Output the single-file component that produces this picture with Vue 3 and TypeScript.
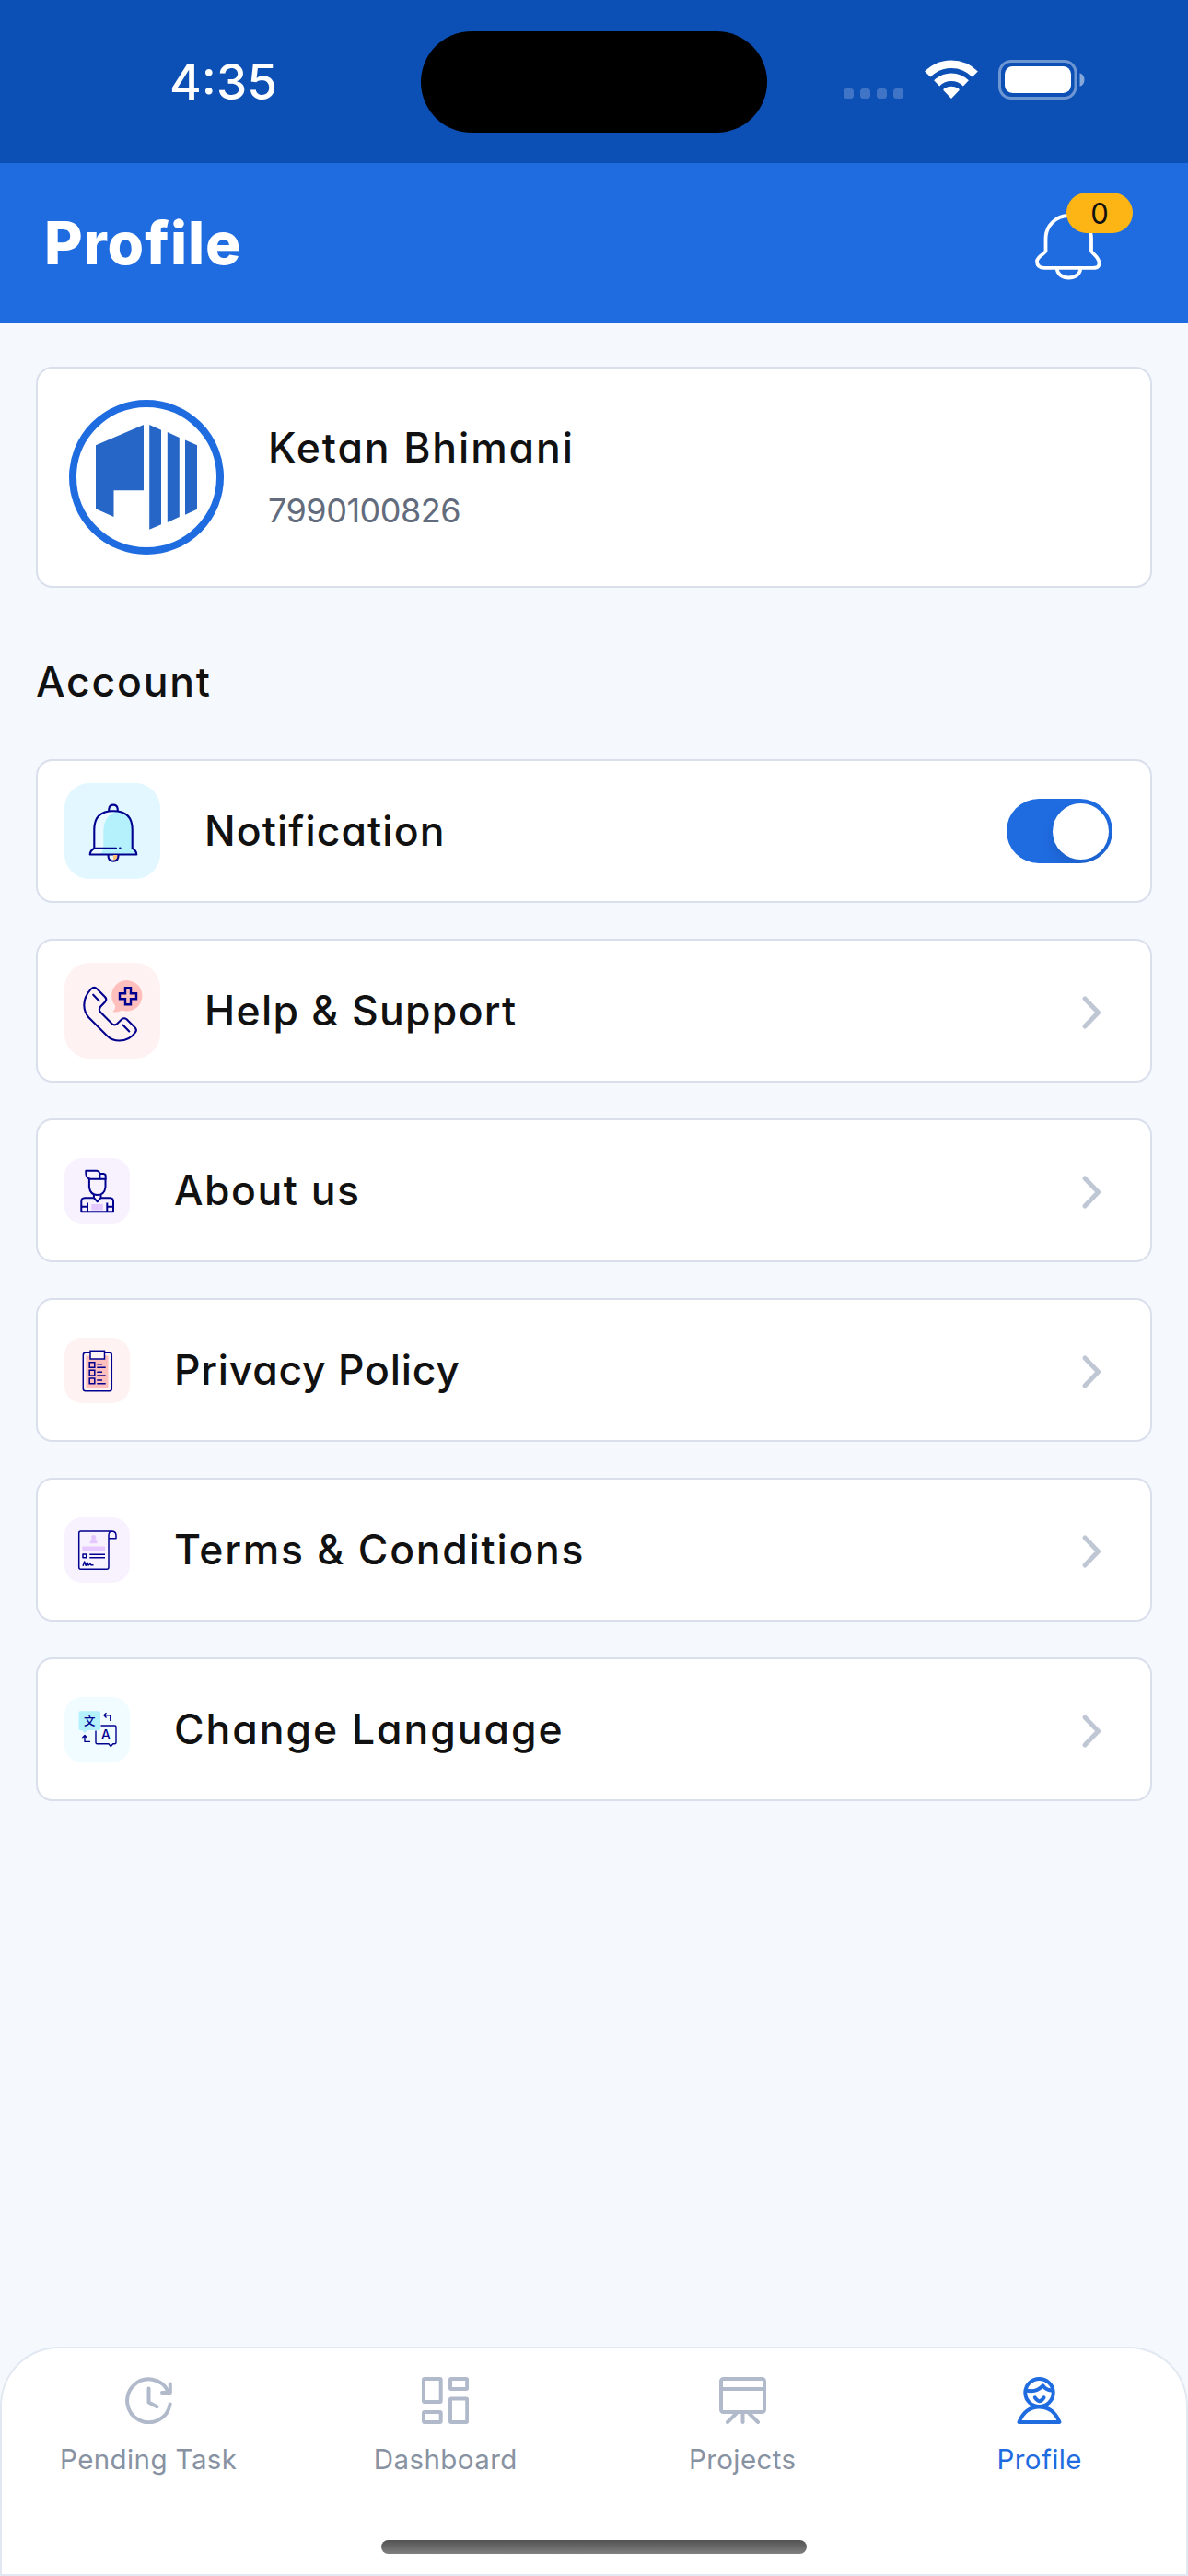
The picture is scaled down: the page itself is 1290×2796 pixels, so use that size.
<script setup lang="ts">
interface Row {
  id: string
  label: string
  size: 'lg' | 'sm'
  tint: string
  spacing: string
  toggle?: boolean
}

const rows: Row[] = [
  { id: 'bell', label: 'Notification', size: 'lg', tint: '#e2f7ff', spacing: '1.1px', toggle: true },
  { id: 'phone', label: 'Help & Support', size: 'lg', tint: '#fff2f2', spacing: '1.3px' },
  { id: 'person', label: 'About us', size: 'sm', tint: '#f8f2ff', spacing: '1.5px' },
  { id: 'clipboard', label: 'Privacy Policy', size: 'sm', tint: '#fff2f2', spacing: '0.75px' },
  { id: 'terms', label: 'Terms & Conditions', size: 'sm', tint: '#f8f2ff', spacing: '1.75px' },
  { id: 'language', label: 'Change Language', size: 'sm', tint: '#f0fcff', spacing: '1.95px' },
]

const tabs = [
  { id: 'pending', label: 'Pending Task', active: false },
  { id: 'dashboard', label: 'Dashboard', active: false },
  { id: 'projects', label: 'Projects', active: false },
  { id: 'profile', label: 'Profile', active: true },
]
</script>

<template>
  <div class="app">
    <div class="status">
      <div class="time">4:35</div>
      <div class="island"></div>
      <div class="indicators">
        <div class="dots"><i v-for="n in 4" :key="n"></i></div>
        <svg class="wifi" width="58" height="42" viewBox="0 0 58 42">
          <g fill="none" stroke="#fff" stroke-width="8.6">
            <path d="M3.2 15.6C17.5 1.1 40.500 1.100 54.800 15.600" />
            <path d="M13.100 25.400C22.200 16.600 35.800 16.600 44.900 25.400" />
          </g>
          <path fill="#fff" d="M29 42L20.400 33Q20 31.600 21.400 31Q29 26.400 36.600 31Q38 31.600 37.600 33Z" />
        </svg>
        <svg class="battery" width="94" height="43" viewBox="0 0 94 43">
          <rect x="1.500" y="1.500" width="82.500" height="40" rx="12.500" fill="none" stroke="#6d96d3" stroke-width="3" />
          <rect x="7" y="7" width="72" height="29" rx="8.500" fill="#fff" />
          <path d="M88.500 14.200V28.800Q93.500 27 93.500 21.500Q93.500 16 88.500 14.200Z" fill="#86a8da" />
        </svg>
      </div>
    </div>

    <header class="header">
      <h1>Profile</h1>
      <div class="alerts">
        <svg width="72" height="72" viewBox="0 0 72 72" fill="none" stroke="#fff" stroke-width="3.800">
          <path d="M11.500 40.500V27A24.750 25 0 0 1 61 27V40.500C61 42.500 69.500 46.500 69.500 53.500C69.500 59 65.500 58.900 62 58.900H10.500C6.500 58.900 2 58 2 51.500C2 46.500 11.500 42.500 11.500 40.500Z" />
          <path d="M23.800 59C23.800 73 49.200 73 49.200 59" />
        </svg>
        <span class="badge">0</span>
      </div>
    </header>

    <main class="content">
      <section class="card user">
        <svg class="avatar" width="168" height="168" viewBox="75 434 168 168">
          <circle cx="159" cy="518" r="80" fill="#fff" stroke="#1f6be0" stroke-width="8" />
          <g fill="#2566c7">
            <path d="M104 483.300L156 461V532.300H123.500V561L104 552.300Z" />
            <path d="M162.200 461L175 466.700V569.300L162.200 574.700Z" />
            <path d="M181.800 469L194.800 475V561L181.800 567Z" />
            <path d="M201 477.500L214 483.300V552.700L201 558.700Z" />
          </g>
        </svg>
        <div class="who">
          <div class="name">Ketan Bhimani</div>
          <div class="number">7990100826</div>
        </div>
      </section>

      <h2>Account</h2>

      <section class="list">
        <div v-for="row in rows" :key="row.id" class="card row">
          <svg :class="['tile', row.size]" :viewBox="row.size === 'lg' ? '0 0 104 104' : '0 0 71 71'">
            <rect width="100%" height="100%" :rx="row.size === 'lg' ? 27 : 19" :fill="row.tint" />

            <g v-if="row.id === 'bell'" fill="none" stroke="#00008f" stroke-width="2.100" stroke-linejoin="round" stroke-linecap="round">
              <path d="M32.300 50.500Q32.300 30 53 30Q73.700 30 73.700 50.500V70.700Q77.500 73 78 77.300H27.800Q28.500 73 32.300 70.700Z" fill="#e9f9ff" stroke="none" />
              <path d="M42.300 52Q43 35 56 31Q73.700 32 73.700 50.500V70.700Q77.500 73 78 77.300H38Q42 75 42.300 70Z" fill="#b4f1fd" stroke="none" />
              <path d="M48.300 30V27.800Q49 23.600 53 23.600Q57 23.600 57.700 27.800V30" />
              <path d="M56 70.700H32.300V50.500Q32.300 30.300 53 30.300Q73.700 30.300 73.700 50.500V70.700Q78 73 78.300 77.500H27.700Q28 73 32.300 70.700" />
              <path d="M60.300 70.700h.1" stroke-width="2.400" />
              <path d="M53 78H58.500Q58 84.500 53 84.500Z" fill="#ffc078" stroke="none" />
              <path d="M47.500 78Q47.300 84.700 53 84.700Q58.700 84.700 58.500 78" />
            </g>

            <g v-else-if="row.id === 'phone'" fill="none" stroke="#00008f" stroke-width="2.100" stroke-linejoin="round" stroke-linecap="round">
              <path d="M52.300 53.300Q55.500 50.500 55 46.500A16.700 16.700 0 1 1 62.500 51.600Q58.500 54 52.300 53.300Z" fill="#ffc0bd" stroke="none" />
              <path d="M66 27.300H72V33.300H78V39.300H72V45.300H66V39.300H60V33.300H66Z" stroke-width="2.400" stroke-linejoin="miter" />
              <path d="M35.500 28.600L44.200 37.300Q46.300 39.800 44.300 42.200L39 47.800Q36.800 50.500 39 53.600L51.700 66.200Q54.500 68.500 57.300 66L62.300 61.200Q65 59.300 67.500 61.300L77 70.800Q78.800 73 77 75.300Q70.500 84.500 59.500 84.500Q51.500 84.500 46.500 79.500L26.500 59.500Q21.500 54 21.300 46Q21.300 36.500 28.800 28.600Q32.300 25.300 35.500 28.600Z" />
              <path d="M31.200 34.700L37.700 41.500M63.500 67.500L70.300 74.500" />
            </g>

            <g v-else-if="row.id === 'person'" fill="none" stroke="#00008f" stroke-width="2" stroke-linejoin="round">
              <rect x="29.300" y="50" width="12.500" height="6.500" fill="#e5c8ff" stroke="none" />
              <path d="M23.300 13.800H35Q38.400 14.300 38.400 18V22.800H28.500Q23.300 21.800 23.300 16.500Z" />
              <path d="M38.400 17H42.500Q44.700 17.300 44.700 19.500V22.800H38.400" />
              <path d="M26.900 22V31.500Q28 40 35.700 40Q43.500 40 44.500 31.500V22" />
              <path d="M31.900 39.500V43L35.700 47.300L39.500 43V39.500" />
              <path d="M31.900 43.300H22Q18.300 43.500 18.300 47V58.200H53V47Q53 43.500 49.500 43.300H39.500" />
              <path d="M25 48.500V58M46.300 48.500V58M18 52.700H25M46.300 52.700H53" />
            </g>

            <g v-else-if="row.id === 'clipboard'" fill="none" stroke="#00008f" stroke-width="1.500">
              <rect x="23.300" y="19.500" width="24.200" height="34.700" fill="#ffc0bd" stroke="none" />
              <rect x="20.300" y="16.300" width="31" height="41.500" rx="2.500" />
              <rect x="28" y="14.300" width="15.500" height="8.700" fill="#fff4f4" />
              <path d="M27.200 26.700h5.600v5.600h-5.600zM27.200 35.300h5.600v5.600h-5.600zM27.200 44.100h5.600v5.600h-5.600z" />
              <path d="M35.300 28.700H41M35.300 32.300H44.700M35.300 37.300H41M35.300 41H44.700M35.300 46H41M35.300 49.700H44.700" />
            </g>

            <g v-else-if="row.id === 'terms'" fill="none" stroke="#00008f" stroke-width="1.500" stroke-linejoin="round">
              <g fill="#e5c8ff" stroke="none">
                <circle cx="31.700" cy="21.500" r="2.600" />
                <path d="M27.700 28.300V26Q28.500 24.700 30.500 24.500V22H33V24.500Q35 24.700 35.500 26V28.300Z" />
                <rect x="19.300" y="31.500" width="24.700" height="5.500" />
              </g>
              <path d="M52.500 15H17.700Q15.700 15 15.700 17V54Q15.700 56.300 17.700 56.300H46Q48 56.300 48 54V19Q48.300 15 52 15Q56 15.500 56 19.500V22.700H48" />
              <path d="M20 40h3.700v3.700h-3.700zM27.300 40.200H44M27.300 43.700H44" />
              <path d="M20 52.700L21.700 48L23.200 52.300L24.800 49L26 52L28 50.500L29 51.800H31.500" />
            </g>

            <g v-else fill="none" stroke="#00008f" stroke-width="1.400" stroke-linejoin="round">
              <path d="M17 15.300H37.500Q39 15.300 39 16.800V34.500Q39 36 37.500 36H25L22 39L19 36H17Q15.600 36 15.600 34.500V16.800Q15.600 15.300 17 15.300Z" fill="#b4f1fd" stroke="none" />
              <path d="M39.500 31H54.500Q56 31 56 32.500V49.200Q56 50.700 54.500 50.700H52.700L50.300 53.500L47.900 50.700H35.500Q34 50.700 34 49.200V36.500" />
              <path d="M45.500 17.200L42.900 19.800L45.500 22.400M43 19.800H49.800V26M19.400 44.200L22 41.600L24.600 44.200M22 41.800V48.400H28" />
              <text class="glyph cjk" x="27.300" y="30.500">文</text>
              <text class="glyph latin" x="45" y="46.300">A</text>
            </g>
          </svg>

          <span class="label" :style="{ letterSpacing: row.spacing }">{{ row.label }}</span>

          <span v-if="row.toggle" class="toggle"><i></i></span>
          <svg v-else class="chevron" width="24" height="38" viewBox="0 0 24 38">
            <path d="M4 4L18.500 19L4 34" fill="none" stroke="#bfc6d4" stroke-width="5" stroke-linecap="round" />
          </svg>
        </div>
      </section>
    </main>

    <nav class="tabs">
      <div v-for="tab in tabs" :key="tab.id" :class="['tab', { active: tab.active }]">
        <svg width="51" height="51" viewBox="0 0 51 51" fill="none" stroke="currentColor" stroke-width="4" stroke-linecap="round" stroke-linejoin="round">
          <template v-if="tab.id === 'pending'">
            <path d="M48.600 29.500A23.400 23.400 0 1 1 46.500 15.500" />
            <path d="M48.800 7.500V17H40M25.500 12.500V27.500L34.500 32.300" />
          </template>
          <template v-else-if="tab.id === 'dashboard'">
            <rect x="2" y="2" width="18.700" height="25" rx="1" />
            <rect x="31" y="2" width="18.200" height="11" rx="1" />
            <rect x="31" y="23.500" width="18.200" height="25.500" rx="1" />
            <rect x="2" y="38" width="18.700" height="11" rx="1" />
          </template>
          <template v-else-if="tab.id === 'projects'">
            <rect x="2" y="2" width="47" height="36" rx="2.500" />
            <path d="M2 13H49M25.500 38V49M18.500 39.500L9 49M32.500 39.500L42 49" />
          </template>
          <template v-else>
            <ellipse cx="25.500" cy="17" rx="15.200" ry="15" />
            <path d="M3.500 49Q10 32.500 25.500 32.500Q41 32.500 47.500 49Z" />
            <path d="M11 14.300Q21.500 17.500 29.500 9.300Q33 14.500 40 14.500M20.800 22.300Q25.500 30 30.500 22.300" />
          </template>
        </svg>
        <span>{{ tab.label }}</span>
      </div>
      <div class="home"></div>
    </nav>
  </div>
</template>

<style>
body {
  margin: 0;
}
</style>

<style scoped>
.app {
  width: 1290px;
  height: 2796px;
  display: flex;
  flex-direction: column;
  background: #f5f8fd;
  font-family: Inter, "Open Sans", sans-serif;
  color: #111;
  overflow: hidden;
}
.status {
  height: 177px;
  background: #0c50b5;
  display: grid;
  grid-template-columns: 457px 376px 457px;
  align-items: center;
  box-sizing: border-box;
  color: #fff;
}
.time {
  padding-left: 28px;
  text-align: center;
  font-size: 53px;
  font-weight: 500;
  line-height: 60px;
}
.island {
  height: 110px;
  border-radius: 55px;
  background: #000;
}
.indicators {
  display: flex;
  padding-left: 83px;
  align-items: flex-end;
  height: 43px;
  margin-top: -4px;
}
.dots {
  display: flex;
  gap: 7px;
  padding-bottom: 1px;
}
.dots i {
  width: 11px;
  height: 11px;
  border-radius: 3.5px;
  background: #3f74c6;
}
.wifi {
  margin-left: 23px;
  margin-bottom: 1px;
}
.battery {
  margin-left: 22px;
}
.header {
  height: 174px;
  box-sizing: border-box;
  padding: 0 94px 0 48px;
  background: #1f6be0;
  color: #fff;
  display: flex;
  align-items: center;
  justify-content: space-between;
}
h1 {
  margin: 0;
  font-size: 64px;
  line-height: 80px;
  font-weight: 800;
  letter-spacing: 0.9px;
}
.alerts {
  position: relative;
  width: 72px;
  height: 72px;
  margin-top: 8px;
}
.alerts svg {
  display: block;
}
.badge {
  position: absolute;
  left: 34px;
  top: -23px;
  width: 72px;
  height: 44px;
  border-radius: 22px;
  background: #fdb515;
  color: #111;
  font-size: 31px;
  line-height: 45px;
  text-align: center;
}
.content {
  flex: 1;
  padding: 47px 39px 0;
}
.card {
  box-sizing: border-box;
  background: #fff;
  border: 2px solid #dadfec;
  border-radius: 18px;
  display: flex;
  align-items: center;
}
.user {
  height: 240px;
  padding-left: 34px;
  gap: 48px;
}
.name {
  font-size: 44.5px;
  line-height: 62px;
  font-weight: 500;
  letter-spacing: 1.9px;
  font-feature-settings: "cv11";
}
.number {
  margin-top: 9px;
  font-size: 36px;
  line-height: 56px;
  letter-spacing: -0.5px;
  color: #626c7d;
}
h2 {
  margin: 0;
  height: 186px;
  box-sizing: border-box;
  padding-top: 18px;
  font-size: 44.5px;
  line-height: 168px;
  font-weight: 500;
  letter-spacing: 1.8px;
  font-feature-settings: "cv11";
}
.list {
  display: flex;
  flex-direction: column;
  gap: 39px;
}
.row {
  height: 156px;
  padding: 0 41px 0 29px;
}
.tile {
  flex: none;
}
.tile.lg {
  width: 104px;
  height: 104px;
}
.tile.sm {
  width: 71px;
  height: 71px;
}
.glyph {
  fill: #00008f;
  stroke: none;
  text-anchor: middle;
}
.cjk {
  font: 500 12.5px "Noto Sans CJK SC", sans-serif;
}
.latin {
  font: 500 14.5px Inter, sans-serif;
}
.label {
  flex: 1;
  margin-left: 48px;
  font-size: 44.5px;
  font-weight: 500;
  line-height: 64px;
  font-feature-settings: "cv11";
}
.toggle {
  width: 115px;
  height: 70px;
  border-radius: 35px;
  background: #1f6be0;
  display: flex;
  align-items: center;
  justify-content: flex-end;
  box-sizing: border-box;
  padding-right: 4px;
  overflow: hidden;
}
.toggle i {
  width: 61px;
  height: 61px;
  border-radius: 50%;
  background: #fff;
  box-shadow: 0 8px 14px rgba(0, 0, 0, 0.1);
}
.chevron {
  margin-right: 10px;
  margin-top: 4px;
}
.tabs {
  position: relative;
  height: 249px;
  box-sizing: border-box;
  box-shadow: inset 0 0 0 2px #e1e8f1;
  border-radius: 64px 64px 0 0;
  background: #fff;
  display: grid;
  grid-template-columns: repeat(4, 1fr);
}
.tab {
  display: flex;
  flex-direction: column;
  align-items: center;
  padding-top: 33px;
  color: #b1bacb;
}
.tab span {
  margin-top: 18px;
  font-size: 29.5px;
  line-height: 40px;
  letter-spacing: 0.4px;
  color: #8792a2;
}
.tab.active,
.tab.active span {
  color: #1f6be0;
}
.home {
  position: absolute;
  left: 414px;
  bottom: 24px;
  width: 462px;
  height: 15px;
  border-radius: 8px;
  background: linear-gradient(#525252, #808080);
}
</style>
